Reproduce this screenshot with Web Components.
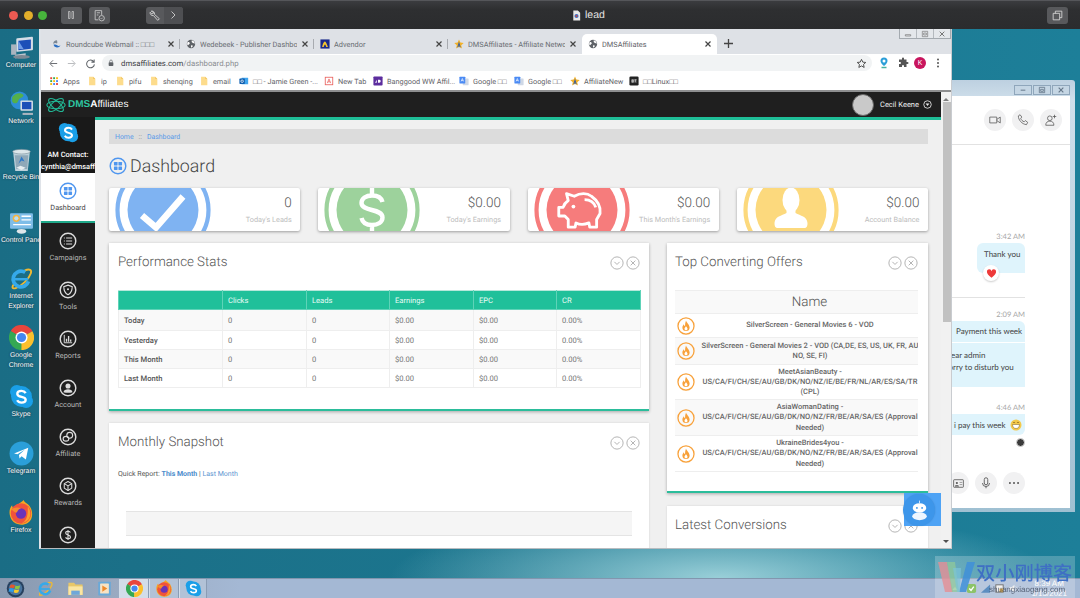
<!DOCTYPE html>
<html>
<head>
<meta charset="utf-8">
<title>lead</title>
<style>
    html, body { margin: 0; padding: 0; width: 1080px; height: 598px; overflow: hidden; background: #1b6f85; font-family: Roboto, "Liberation Sans", sans-serif; }
</style>
</head>
<body>
<mac-desk>
    <mac-titlebar></mac-titlebar>
    <desk-area>
        <desk-icon icon="computer" at="0" label="Computer"></desk-icon>
        <desk-icon icon="network" at="56" label="Network"></desk-icon>
        <desk-icon icon="recycle" at="112" label="Recycle Bin"></desk-icon>
        <desk-icon icon="control" at="175" label="Control Pane"></desk-icon>
        <desk-icon icon="ie" at="231" label="Internet<br>Explorer"></desk-icon>
        <desk-icon icon="chrome" at="290" label="Google<br>Chrome"></desk-icon>
        <desk-icon icon="skype" at="349" label="Skype"></desk-icon>
        <desk-icon icon="telegram" at="406" label="Telegram"></desk-icon>
        <desk-icon icon="firefox" at="465" label="Firefox"></desk-icon>
        <skype-window></skype-window>
        <chrome-window>
            <browser-tabs></browser-tabs>
            <browser-toolbar></browser-toolbar>
            <bookmark-bar></bookmark-bar>
            <dms-page>
                <dash-board>
                    <stat-card slot="stats" art="check" color="#7fb3f2" value="0" label="Today's Leads"></stat-card>
                    <stat-card slot="stats" art="dollar" color="#9dd29c" value="$0.00" label="Today's Earnings"></stat-card>
                    <stat-card slot="stats" art="piggy" color="#f67c7c" value="$0.00" label="This Month's Earnings"></stat-card>
                    <stat-card slot="stats" art="person" color="#fcd97d" value="$0.00" label="Account Balance"></stat-card>

                    <dash-panel slot="left" heading="Performance Stats" accent>
                        <stats-table></stats-table>
                    </dash-panel>
                    <dash-panel slot="left" heading="Monthly Snapshot">
                        <monthly-snapshot></monthly-snapshot>
                    </dash-panel>

                    <dash-panel slot="right" heading="Top Converting Offers" accent style="--pad-l:8px;--pad-r:10px">
                        <offers-table>
                            <offer-row h="24">SilverScreen - General Movies 6 - VOD</offer-row>
                            <offer-row h="27" alt>SilverScreen - General Movies 2 - VOD (CA,DE, ES, US, UK, FR, AU<br>NO, SE, FI)</offer-row>
                            <offer-row h="35">MeetAsianBeauty -<br>US/CA/FI/CH/SE/AU/GB/DK/NO/NZ/IE/BE/FR/NL/AR/ES/SA/TR<br>(CPL)</offer-row>
                            <offer-row h="36" alt>AsiaWomanDating -<br>US/CA/FI/CH/SE/AU/GB/DK/NO/NZ/FR/BE/AR/SA/ES (Approval<br>Needed)</offer-row>
                            <offer-row h="36">UkraineBrides4you -<br>US/CA/FI/CH/SE/AU/GB/DK/NO/NZ/FR/BE/AR/SA/ES (Approval<br>Needed)</offer-row>
                        </offers-table>
                    </dash-panel>
                    <dash-panel slot="right" heading="Latest Conversions" style="--pad-l:8px;--pad-r:10px"></dash-panel>
                </dash-board>
            </dms-page>
        </chrome-window>
    </desk-area>
    <win-taskbar></win-taskbar>
    <blog-mark></blog-mark>
</mac-desk>

<script>
// shared svg icons, all on a 24 box unless noted
const svg = (body, size = 24, box = 24) =>
    `<svg xmlns="http://www.w3.org/2000/svg" width="${size}" height="${size}" viewBox="0 0 ${box} ${box}">${body}</svg>`;

const ring = '<circle cx="12" cy="12" r="10.4" fill="none" stroke="currentColor" stroke-width="1.9"/>';

const NAV_ICONS = {
    dash: ring + '<g fill="currentColor"><rect x="6.6" y="6.6" width="4.8" height="4.8" rx=".6"/><rect x="12.6" y="6.6" width="4.8" height="4.8" rx=".6"/><rect x="6.6" y="12.6" width="4.8" height="4.8" rx=".6"/><rect x="12.6" y="12.6" width="4.8" height="4.8" rx=".6"/></g>',
    list: ring + '<g stroke="currentColor" stroke-width="1.5" fill="none"><path d="M9.5 8h8M9.5 12h8M9.5 16h8"/><path d="M6.5 8h1.2M6.5 12h1.2M6.5 16h1.2"/></g>',
    shield: ring + '<path d="M12 5.5l5.6 2c0 5-1.6 8.6-5.6 10.8C8 16.100 6.400 12.500 6.400 7.500z" fill="none" stroke="currentColor" stroke-width="1.5"/><circle cx="12" cy="11" r="1.400" fill="currentColor"/>',
    bars: ring + '<path d="M7 6.500V17h10.500" fill="none" stroke="currentColor" stroke-width="1.300"/><path d="M10 15.500v-4M12.800 15.500V8M15.600 15.500v-3" stroke="currentColor" stroke-width="1.800"/>',
    user: ring + '<circle cx="12" cy="9.300" r="3.400" fill="currentColor"/><path d="M6 17.500c.4-3 3-4 6-4s5.600 1 6 4c-3 1-9 1-12 0z" fill="currentColor"/>',
    link: ring + '<g fill="none" stroke="currentColor" stroke-width="1.500"><circle cx="14.300" cy="9.700" r="3.900"/><ellipse cx="9.300" cy="14.300" rx="3.800" ry="3.200"/></g>',
    cube: ring + '<g fill="none" stroke="currentColor" stroke-width="1.400" stroke-linejoin="round"><path d="M12 6l5 2.800v6L12 18l-5-3.200v-6z"/><path d="M7 8.800l5 3 5-3M12 11.800V18"/></g>',
    money: ring + '<path d="M15.200 8.600c-.8-1.200-1.900-1.600-3.200-1.600-1.800 0-3.100 1-3.100 2.400 0 3.200 6.400 1.900 6.400 5.100 0 1.500-1.400 2.500-3.300 2.500-1.400 0-2.600-.6-3.300-1.800M12 5.200v13.600" fill="none" stroke="currentColor" stroke-width="1.500"/>'
};

const APP_ICONS = {
    computer: '<rect x="7" y="2" width="16" height="13" rx="1" fill="#d5dde6" transform="skewY(-6) translate(0 2)"/><rect x="9" y="4.500" width="12" height="9" fill="#1c4fb8" transform="skewY(-6) translate(0 2)"/><path d="M9 5.500l5 8H9z" fill="#6d9be6"/><path d="M2 9h5v10H2z" fill="#aab4bf"/><path d="M6 19l10-1.500v2.500L6 22.500z" fill="#bcc5ce"/><ellipse cx="12" cy="21" rx="8" ry="1.800" fill="#7d8994"/>',
    network: '<circle cx="10" cy="9" r="8.500" fill="#2d8ed8"/><path d="M3 6c3-4 8-5 11-2-1 3-4 2-5 5s-4 4-6 1zM13 12c2 0 3 1 2 3-1 1-3 1-4 0z" fill="#55b04a"/><rect x="11" y="9" width="12" height="10" rx="1" fill="#d5dde6"/><rect x="12.500" y="10.500" width="9" height="7" fill="#1c4fb8"/><path d="M13 21h10v2H13z" fill="#aab4bf"/>',
    recycle: '<path d="M4 5h16l-2 18H6z" fill="#bcd0da"/><path d="M5.500 8h13l-1 13H7z" fill="#8fa8b8"/><ellipse cx="12" cy="4.500" rx="8.500" ry="2.200" fill="#dce6ea" stroke="#7f939e" stroke-width=".6"/><path d="M9 16l3-7 3 5-3-1z" fill="#2f79c8"/><path d="M7 20l4-2 5 2-4 2z" fill="#e6edf0"/>',
    control: '<rect x="1" y="3" width="22" height="15" rx="1" fill="#7fbde8"/><circle cx="7" cy="8" r="3.500" fill="#f4b33f"/><circle cx="7" cy="8" r="2" fill="#b9def5"/><path d="M12 6h9M12 9.500h9M4 14h17" stroke="#fff" stroke-width="1.300"/><ellipse cx="12" cy="20.500" rx="4.500" ry="2.200" fill="#dfe6ea"/>',
    ie: '<path d="M5.500 16.500C2 20.500 3 22.500 7 21c5-2 12-8 14-14 1-3-1-5-6-2.500" fill="none" stroke="#efb932" stroke-width="1.800"/><circle cx="11.500" cy="12.500" r="7.500" fill="none" stroke="#35a9ea" stroke-width="3.600" stroke-dasharray="37 10" transform="rotate(18 11.500 12.500)"/><path d="M5 11.500h13.500v2.400H5z" fill="#35a9ea"/>',
    chrome: '<circle cx="12" cy="12" r="8.400" fill="none" stroke="#e8453c" stroke-width="7.400" stroke-dasharray="17.600 35.200" transform="rotate(-150 12 12)"/><circle cx="12" cy="12" r="8.400" fill="none" stroke="#35a853" stroke-width="7.400" stroke-dasharray="17.600 35.200" transform="rotate(90 12 12)"/><circle cx="12" cy="12" r="8.400" fill="none" stroke="#fbc02d" stroke-width="7.400" stroke-dasharray="17.600 35.200" transform="rotate(-30 12 12)"/><circle cx="12" cy="12" r="5.800" fill="#fff"/><circle cx="12" cy="12" r="4.400" fill="#4587f1"/>',
    skype: '<g fill="#1a9fe8"><circle cx="12" cy="12" r="10"/><circle cx="7.500" cy="7.500" r="6.500"/><circle cx="16.500" cy="16.500" r="6.500"/></g><path d="M16 8.700c-.9-1.500-2.400-2.100-4-2.100-2.400 0-4 1.200-4 2.900 0 3.700 8 2.200 8 5.600 0 1.600-1.700 2.800-4 2.800-1.800 0-3.300-.8-4.200-2.300" fill="none" stroke="#fff" stroke-width="2.300"/>',
    telegram: '<circle cx="12" cy="12" r="11.500" fill="#2b9fd9"/><path d="M4.800 12l13.700-5.500-2.300 11.200-4.100-3-2 2-.6-3.300 5.600-5-7 4.400z" fill="#fff"/>',
    firefox: '<path d="M14 0c1 3 5 3 7 8 2 4 2 11-3 14-5 3-12 2-15.500-3C-.5 14 0 8 3 5c0 2 1 3 2 3 1-3 6-5 9-8z" fill="#f5a623"/><circle cx="11.500" cy="13" r="9.800" fill="#f0533c"/><path d="M18 6c3 4 3.500 9 .5 13-2 2-4 3-6 3 4-2 6-6 5.500-16z" fill="#fb9f2c"/><circle cx="11.500" cy="13" r="5" fill="#6a33b8"/><path d="M2.500 9c2-2 6-2.500 9-1-2 .5-3 2-4 4-1.500 0-3.500-1-5-3z" fill="#f58b2e"/>',
    fold: '<path d="M2 4h8l2 2.500h10V21H2z" fill="#e8c768"/><path d="M2 9h20v12H2z" fill="#fbe6a2"/><path d="M6 15h12v6H6z" fill="#6fa7d9"/>',
    media: '<rect x="2" y="1" width="20" height="22" rx="1" fill="#69a9d8"/><rect x="5" y="4" width="14" height="16" rx="1" fill="#f7e3c4"/><path d="M8.500 7l8 5-8 5z" fill="#ef8a2a"/>',
    winorb: '<circle cx="12" cy="12" r="11" fill="#27415f"/><circle cx="12" cy="12" r="8.600" fill="#49749f"/><path d="M5.500 7.500c2-.8 4-.6 5.800.3l-1.100 4c-1.800-1-3.800-1-5.800-.4z" fill="#e2572d"/><path d="M12 8.100c2 1 4 1 6-.2l-1.100 4c-2 1.100-3.900 1-5.900 0z" fill="#8cc63f"/><path d="M4.200 12.200c2-.6 4-.6 5.800.4l-1.100 4c-1.800-1-3.800-1-5.800-.3z" fill="#2f9ee6"/><path d="M10.700 12.800c2 1 4 1 6 0l-1.100 4c-2 1-4 1-5.900 0z" fill="#f5c92e"/>'
};

const TAB_ICONS = {
    cube: '<path d="M12 3a9 9 0 0 0-9 9c3-3 7-3 9-1 2-3 0-6 0-8z" fill="#7b8794"/><path d="M3.500 14a9 9 0 0 0 17 1c-3 2-6 2-8 0-3-2-6-2-9-1z" fill="#2a6fc4"/>',
    globe: '<circle cx="12" cy="12" r="10" fill="#5f6368"/><path d="M4 7c3 0 5 1 5 3s-2 2-3 4-2 1-3-1c-.5-2 0-4 1-6zM14 3c4 1 7 4 7 8-2 0-3-2-5-2s-3-2-2-6zM13 15c2 0 4 1 3 3l-3 3c-1-2-2-4 0-6z" fill="#fff"/>',
    advendor: '<rect x="1" y="1" width="22" height="22" fill="#1a2a8a"/><path d="M5 19c2-9 5-13 7-13s4 5 7 13h-4c-1-3-2-6-3-6s-2 3-3 6z" fill="#f4c52e"/>',
    star: '<path d="M12 1l3.300 7.500 8 .8-6 5.400 1.800 8L12 18.500 4.900 22.700l1.800-8-6-5.400 8-.8z" fill="#f3b229"/><path d="M12 6l-4 14h2.500l1.500-6 1.500 6H16z" fill="#2c59a8"/>'
};

const BOOK_ICONS = {
    apps: '<g>' + [['#ea4335',3],['#fbbc05',10],['#34a853',17]].map(([c, x], i) => [3, 10, 17].map((y, j) => `<rect x="${x}" y="${y}" width="4.500" height="4.500" fill="${['#ea4335','#34a853','#fbbc05','#4285f4'][(i + j) % 4]}"/>`).join('')).join('') + '</g>',
    folder: '<path d="M5 2h10l5 5v15H5z" fill="#fddc8c"/><path d="M15 2l5 5h-5z" fill="#f2c55f"/>',
    outlook: '<rect x="6" y="4" width="16" height="16" rx="1" fill="#41a5ee"/><rect x="1" y="6" width="13" height="13" rx="1.500" fill="#0f5fb0"/><circle cx="7.500" cy="12.500" r="3" fill="none" stroke="#fff" stroke-width="1.800"/>',
    newtab: '<rect x="3" y="3" width="18" height="18" fill="#fff" stroke="#e9615d" stroke-width="2"/><path d="M8 17l4-10 4 10M9.500 14h5" fill="none" stroke="#e9615d" stroke-width="1.800"/>',
    bang: '<rect x="1" y="1" width="22" height="22" rx="2" fill="#5c2d9e"/><path d="M5 16l4-7v7zM12 9h3a3.500 3.500 0 0 1 0 7h-3z" fill="#fff"/>',
    gtrans: '<rect x="9" y="6" width="14" height="16" rx="1" fill="#cfd8e6"/><rect x="1" y="2" width="14" height="16" rx="1" fill="#4a8af4"/><path d="M5 13l3-7 3 7M6 11h4" fill="none" stroke="#fff" stroke-width="1.500"/>',
    star: TAB_ICONS.star,
    bt: '<rect x="1" y="1" width="22" height="22" rx="3" fill="#222"/><path d="M5 7h14v10H5z" fill="#444"/><path d="M7 9h3a1.500 1.500 0 0 1 0 3H7zM7 12h3a1.500 1.500 0 0 1 0 3H7zM13 9h5M15.500 9v6" fill="none" stroke="#fff" stroke-width="1.200"/>'
};

const STAT_ART = {
    check: '<path d="M-21 5.500L-7 17.500 20-13.500" fill="none" stroke="#fff" stroke-width="6.500"/>',
    dollar: '<path d="M10.500-8c-1-4-5-6.500-10.500-6.500-6 0-10.500 3-10.500 7.500C-10.500 2 10.500-2 10.500 7.500c0 4.500-4.500 7.500-10.500 7.500-5.500 0-9.500-2.500-10.500-7M0-14.500V-25M0 15V25" fill="none" stroke="#fff" stroke-width="4.400"/>',
    piggy: '<g transform="scale(.86) translate(1 1)"><path d="M-17-12l-2-8 9 3c7-4 15-4 20 0 7 5 11 12 10 20l-4 7v9h-8l-1-5c-5 2-11 2-15 0l-1 5h-8v-9l-4-4h-7V-4h5c1-3 3-6 6-8z" fill="none" stroke="#fff" stroke-width="3.300" stroke-linejoin="round"/><circle cx="-11" cy="-5" r="2.200" fill="#fff"/><path d="M2-13c6 0 11 3 13 9" fill="none" stroke="#fff" stroke-width="3.300"/></g>',
    person: '<ellipse cx="0" cy="-10" rx="8.500" ry="12.500" fill="#fff"/><path d="M-4.500-2h9v5c5 3 11.500 3 12 10 .2 3-1 5-3 5h-27c-2 0-3.200-2-3-5 .5-7 7-7 12-10z" fill="#fff"/>'
};

class ShadowBox extends HTMLElement {
    constructor() {
        super();
        this.attachShadow({mode: 'open'});
    }

    connectedCallback() {
        this.shadowRoot.innerHTML = `<style>${this.styles()}</style>${this.markup()}`;
    }

    styles() { return ':host { display: block; }'; }
    markup() { return '<slot></slot>'; }
}

class MacDesk extends ShadowBox {
    styles() {
        return `:host { display: flex; flex-direction: column; width: 1080px; height: 598px; position: relative; overflow: hidden;
            text-rendering: geometricPrecision; filter: blur(.3px); }`;
    }
}

class MacTitlebar extends ShadowBox {
    styles() {
        return `
            :host { display: flex; align-items: center; flex: none; height: 29px; box-sizing: border-box; padding: 0 12px 0 9px;
                background: linear-gradient(#3b3c3f, #2e2f31 30%, #2b2c2e); border-top: 1px solid #55565a; position: relative; }
            .dot { width: 9px; height: 9px; border-radius: 50%; margin-right: 5.500px; }
            .btn { display: flex; align-items: center; justify-content: center; height: 17px; width: 21px; background: #58595c; border-radius: 3px; color: #d8d8d8; }
            .pause { margin-left: 8px; }
            .shot { margin-left: 7px; }
            .tool { margin-left: 36px; width: 37px; }
            .tool span { flex: 1; display: flex; justify-content: center; align-items: center; height: 100%; }
            .tool span + span { background: #4e4f52; border-radius: 0 3px 3px 0; }
            .name { position: absolute; left: 571px; top: 0; height: 28px; display: flex; align-items: center; gap: 3px; color: #e6e6e6; font: 10.500px "Liberation Sans", sans-serif; }
            .right { margin-left: auto; }
        `;
    }

    markup() {
        return `
            <i class="dot" style="background:#ec5a52"></i>
            <i class="dot" style="background:#e3ae2b"></i>
            <i class="dot" style="background:#47b43c"></i>
            <div class="btn pause">${svg('<path d="M7 5h3v14H7zM14 5h3v14h-3z" fill="none" stroke="currentColor" stroke-width="1.300"/>', 12)}</div>
            <div class="btn shot">${svg('<path d="M4 3h12v8M4 3v17h6M7 7h6M7 11h3" fill="none" stroke="currentColor" stroke-width="1.400"/><circle cx="16" cy="17" r="5" fill="none" stroke="currentColor" stroke-width="1.400"/><path d="M14 17l1.500 1.500 2.500-2.500" fill="none" stroke="currentColor"/>', 13)}</div>
            <div class="btn tool">
                <span>${svg('<path d="M6 4a5 5 0 0 1 6 6l9 8-3 3-8-9a5 5 0 0 1-6-6l3 3 3-1 0-2z" fill="none" stroke="currentColor" stroke-width="1.600" stroke-linejoin="round"/>', 13)}</span>
                <span>${svg('<path d="M9 5l7 7-7 7" fill="none" stroke="currentColor" stroke-width="1.700"/>', 12)}</span>
            </div>
            <div class="name">
                ${svg('<path d="M5 1h10l5 5v17H5z" fill="#e8e8e8"/><circle cx="12" cy="13" r="4.500" fill="#3d6fc2"/><circle cx="12" cy="13" r="2" fill="#d84a3e"/>', 11)}
                <span>lead</span>
            </div>
            <div class="btn right">${svg('<path d="M4 8h12v12H4z M8 8V4h12v12h-4" fill="none" stroke="currentColor" stroke-width="1.600"/>', 13)}</div>
        `;
    }
}

class DeskArea extends ShadowBox {
    styles() {
        return `:host { display: block; flex: 1; position: relative; overflow: hidden;
            background:
                radial-gradient(330px 70px at 720px 549px, rgba(160,212,220,.95), rgba(160,212,220,0)),
                linear-gradient(90deg, #1a6d85 0, #1b7088 130px, #1d7f99 1080px); }`;
    }
}

class DeskIcon extends ShadowBox {
    styles() {
        const top = this.getAttribute('at') || 0;
        return `
            :host { position: absolute; left: 0; top: ${top}px; width: 42px; display: flex; flex-direction: column; align-items: center; color: #fff;
                font: 6.900px/9.800px "Liberation Sans", sans-serif; text-align: center; text-shadow: 0 0 2px #123; white-space: nowrap; }
            svg { display: block; margin: 6px 0 1px; }
        `;
    }

    markup() {
        return `${svg(APP_ICONS[this.getAttribute('icon')], 25)}<span>${this.getAttribute('label')}</span>`;
    }
}

class RoundButton extends ShadowBox {
    styles() {
        return `:host { display: flex; align-items: center; justify-content: center; width: 22px; height: 22px; border-radius: 50%; background: #f1f1f2; flex: none; color: #555; }`;
    }
}

class SkypeWindow extends ShadowBox {
    styles() {
        return `
            :host { position: absolute; left: 940px; top: 51px; width: 135px; height: 432px; box-sizing: border-box; padding: 16px 5px 4px 0;
                background: linear-gradient(#bdd0e0, #cfdfeb 20px, #9fc0d2); border-radius: 3px 3px 0 0; font: 8px Lato, "Liberation Sans", sans-serif; color: #444; }
            .wins { position: absolute; top: 5px; right: 5px; display: flex; gap: 1px; }
            .wins i { width: 18px; height: 10px; border: 1px solid #8fa6bb; box-sizing: border-box; background: #c5d6e4; display: flex; align-items: center; justify-content: center; color: #66788a; }
            .body { background: #fff; height: 100%; display: flex; flex-direction: column; }
            .head { height: 49px; flex: none; box-sizing: border-box; border-bottom: 1px solid #e2e2e2; display: flex; justify-content: flex-end; align-items: flex-start; gap: 6px; padding: 13px 8px 0 0; }
            .log { width: 85px; flex: 1; display: flex; flex-direction: column; align-items: stretch; white-space: nowrap; }
            .time { height: 10px; line-height: 10px; text-align: right; color: #a7a7a7; font-size: 7.500px; margin-bottom: 1px; }
            .bubble { background: #dff4fc; padding-left: 16px; position: relative; border-radius: 6px 6px 0 0; }
            .thanks { margin: 0 0 0 37px; height: 30px; padding: 6px 0 0 7px; box-sizing: border-box; border-radius: 6px 6px 0 6px; }
            .heart { position: absolute; left: 6px; bottom: -8px; width: 16px; height: 16px; border-radius: 50%; background: #fff; box-shadow: 0 1px 2px rgba(0,0,0,.2); display: flex; align-items: center; justify-content: center; }
            hr { border: 0; border-top: 1px solid #e2e2e2; margin: 24px 0 12px; width: 100%; }
            .pay { height: 21px; line-height: 21px; margin-bottom: 1px; }
            .dear { height: 44px; line-height: 12px; padding: 6px 0 0 5px; box-sizing: border-box; border-radius: 0; }
            .last { height: 21px; padding-left: 14px; display: flex; align-items: center; gap: 4px; border-radius: 6px 0 6px 6px; }
            .mug { margin: 3px 0 0 auto; width: 9px; height: 9px; border-radius: 50%; background: #3a3a3a; border: 1px solid #ddd; box-sizing: border-box; }
            .tools { display: flex; gap: 6px; justify-content: flex-end; margin-top: 25px; }
        `;
    }

    markup() {
        return `
            <div class="wins">
                <i>${svg('<path d="M5 11h14v3H5z" fill="currentColor"/>', 8)}</i>
                <i>${svg('<path d="M4 4h16v16H4zM8 10h8v6H8z" fill="none" stroke="currentColor" stroke-width="2.500"/>', 8)}</i>
                <i>${svg('<path d="M5 5l14 14M19 5L5 19" stroke="currentColor" stroke-width="3.500"/>', 8)}</i>
            </div>
            <div class="body">
                <div class="head">
                    <round-button>${svg('<path d="M3 7h12v10H3zM15 11l6-4v10l-6-4" fill="none" stroke="currentColor" stroke-width="1.300"/>', 14)}</round-button>
                    <round-button>${svg('<path d="M7 3l3 4-2 2c1 3 3 5 6 6l2-2 4 3-2 4C10 19 4 12 4 5z" fill="none" stroke="currentColor" stroke-width="1.300"/>', 14)}</round-button>
                    <round-button>${svg('<circle cx="10" cy="9" r="4" fill="none" stroke="currentColor" stroke-width="1.300"/><path d="M3 21c0-5 3-7 7-7s7 2 7 7zM18 3v6M15 6h6" fill="none" stroke="currentColor" stroke-width="1.300"/>', 14)}</round-button>
                </div>
                <div class="log">
                    <div class="time" style="margin-top:87px">3:42 AM</div>
                    <div class="bubble thanks">Thank you
                        <span class="heart">${svg('<path d="M12 21C5 15 2 12 2 8a5 5 0 0 1 10-1 5 5 0 0 1 10 1c0 4-3 7-10 13z" fill="#ee3a3a"/>', 11)}</span>
                    </div>
                    <hr>
                    <div class="time">2:09 AM</div>
                    <div class="bubble pay">Payment this week</div>
                    <div class="bubble dear">Dear admin<br>sorry to disturb you</div>
                    <div class="time" style="margin-top:16px">4:46 AM</div>
                    <div class="bubble last">
                        <span>i pay this week</span>
                        ${svg('<circle cx="12" cy="12" r="11" fill="#f4c94a"/><path d="M5 11h14c0 5-3 8-7 8s-7-3-7-8z" fill="#fff" stroke="#7a5a1a"/><path d="M6 8c1-2 3-2 4 0M14 8c1-2 3-2 4 0" fill="none" stroke="#7a5a1a" stroke-width="1.500"/>', 12)}
                    </div>
                    <div class="mug"></div>
                    <div class="tools">
                        <round-button>${svg('<rect x="3" y="5" width="18" height="14" rx="1" fill="none" stroke="currentColor" stroke-width="1.500"/><circle cx="9" cy="11" r="2" fill="currentColor"/><path d="M5.500 17c.5-2 6.500-2 7 0zM14 10h5M14 14h5" fill="currentColor" stroke="currentColor"/>', 13)}</round-button>
                        <round-button>${svg('<rect x="9" y="3" width="6" height="12" rx="3" fill="none" stroke="currentColor" stroke-width="1.500"/><path d="M6 12a6 6 0 0 0 12 0M12 18v3" fill="none" stroke="currentColor" stroke-width="1.500"/>', 14)}</round-button>
                        <round-button>${svg('<g fill="currentColor"><circle cx="5" cy="12" r="1.700"/><circle cx="12" cy="12" r="1.700"/><circle cx="19" cy="12" r="1.700"/></g>', 14)}</round-button>
                    </div>
                </div>
            </div>
        `;
    }
}

class ChromeWindow extends ShadowBox {
    styles() {
        return `:host { position: absolute; left: 39px; top: 0; width: 913px; height: 520px; box-sizing: border-box; display: flex; flex-direction: column;
            background: #fff; border-left: 2px solid #dfe3e8; border-right: 1px solid #c9ccd0; border-bottom: 1px solid #b8bcc0; overflow: hidden; }`;
    }
}

class TabItem extends ShadowBox {
    styles() {
        const on = this.hasAttribute('active');
        const sep = on || this.hasAttribute('last') ? '' : 'background: linear-gradient(#a8abb0, #a8abb0) right 5px / 1px 10px no-repeat;';
        return `
            :host { display: flex; align-items: center; flex: none; width: ${on ? 135 : 134}px; height: 20px; box-sizing: border-box; padding: 0 5px 0 6px; gap: 4px;
                font-size: 7.400px; color: ${on ? '#5f6368' : '#6a6e73'}; ${on ? 'background: #fff; border-radius: 5px 5px 0 0;' : sep} }
            svg { flex: none; display: block; }
            span { flex: 1; overflow: hidden; white-space: nowrap; }
            .x { color: #444; }
        `;
    }

    markup() {
        return `${svg(TAB_ICONS[this.getAttribute('icon')], 10)}
            <span>${this.getAttribute('label')}</span>
            <svg class="x" width="8" height="8" viewBox="0 0 8 8"><path d="M1.500 1.500l5 5M6.500 1.500l-5 5" stroke="currentColor" stroke-width="1.200"/></svg>`;
    }
}

class BrowserTabs extends ShadowBox {
    styles() {
        return `
            :host { display: flex; align-items: flex-end; height: 25px; flex: none; box-sizing: border-box; padding-left: 5px; background: #dee1e6; position: relative; }
            .plus { margin: 0 0 5px 6px; color: #444; }
            .wins { position: absolute; top: 0; right: 0; height: 10px; width: 52px; display: flex; box-sizing: border-box; border: 1px solid #a4aab0; border-top: 0; background: #e4e7eb; }
            .wins i { flex: 1; border-right: 1px solid #b4b9be; display: flex; align-items: center; justify-content: center; color: #777; }
        `;
    }

    markup() {
        return `
            <tab-item icon="cube" label="Roundcube Webmail :: □□□"></tab-item>
            <tab-item icon="globe" label="Wedebeek - Publisher Dashboard"></tab-item>
            <tab-item icon="advendor" label="Advendor"></tab-item>
            <tab-item icon="star" label="DMSAffiliates - Affiliate Network" last></tab-item>
            <tab-item icon="globe" label="DMSAffiliates" active></tab-item>
            <svg class="plus" width="11" height="11" viewBox="0 0 11 11"><path d="M5.500 1v9M1 5.500h9" stroke="currentColor" stroke-width="1.300"/></svg>
            <div class="wins">
                <i>${svg('<path d="M4 14h16v4H4z" fill="none" stroke="currentColor" stroke-width="2"/>', 8)}</i>
                <i>${svg('<path d="M4 4h16v16H4zM8 9h8v6H8z" fill="none" stroke="currentColor" stroke-width="2"/>', 8)}</i>
                <i style="border:0">${svg('<path d="M5 5l14 14M19 5L5 19" stroke="currentColor" stroke-width="3"/>', 8)}</i>
            </div>
        `;
    }
}

class BrowserToolbar extends ShadowBox {
    styles() {
        return `
            :host { display: flex; align-items: center; height: 18px; flex: none; background: #fff; color: #5f6368; padding-left: 3px; }
            .nav { width: 18.500px; display: flex; justify-content: center; flex: none; }
            .omni { margin-left: 2.500px; width: 770px; height: 16px; box-sizing: border-box; border-radius: 8px; background: #f1f3f4; display: flex; align-items: center; padding: 0 5px; font-size: 7.800px; color: #8a8d91; flex: none; }
            .omni b { font-weight: 400; color: #3c4043; }
            .lock { margin-right: 6px; color: #5f6368; display: flex; }
            .star { margin-left: auto; color: #444; display: flex; }
            .ext { flex: none; display: flex; justify-content: center; }
            .me { width: 12px; height: 12px; border-radius: 50%; background: #c8155e; color: #fff; font-size: 7px; display: flex; align-items: center; justify-content: center; }
        `;
    }

    markup() {
        return `
            <div class="nav">${svg('<path d="M20 12H5M11 5l-7 7 7 7" fill="none" stroke="currentColor" stroke-width="2"/>', 11)}</div>
            <div class="nav" style="color:#b4b6b9">${svg('<path d="M4 12h15M13 5l7 7-7 7" fill="none" stroke="currentColor" stroke-width="2"/>', 11)}</div>
            <div class="nav">${svg('<path d="M19 8a8.500 8.500 0 1 0 1.500 6M20 3v6h-6" fill="none" stroke="currentColor" stroke-width="2.200"/>', 11)}</div>
            <div class="omni">
                <span class="lock">${svg('<rect x="5" y="10" width="14" height="11" rx="2" fill="currentColor"/><path d="M8 10V7a4 4 0 0 1 8 0v3" fill="none" stroke="currentColor" stroke-width="2"/>', 8)}</span>
                <span><b>dmsaffiliates.com</b>/dashboard.php</span>
                <span class="star">${svg('<path d="M12 3l2.800 6 6.500.7-4.900 4.400 1.400 6.500L12 17.300 6.200 20.600l1.400-6.500L2.700 9.700 9.200 9z" fill="none" stroke="currentColor" stroke-width="2"/>', 11)}</span>
            </div>
            <div class="ext" style="width:24px">${svg('<path d="M12 1a7 7 0 0 1 7 7c0 3-4 8-7 10-3-2-7-7-7-10a7 7 0 0 1 7-7z" fill="#2b9ed8"/><circle cx="12" cy="8" r="3" fill="#fff"/><path d="M7 21h10" stroke="#48b3a0" stroke-width="3"/>', 12)}</div>
            <div class="ext" style="width:14px">${svg('<path d="M10 3a2 2 0 0 1 4 0v2h5v5h2a2 2 0 0 1 0 4h-2v6h-5v-2a2 2 0 0 0-4 0v2H4v-6h2a2 2 0 0 0 0-4H4V5h6z" fill="#555"/>', 12)}</div>
            <div class="ext" style="width:20px"><div class="me">K</div></div>
            <div class="ext" style="width:16px">${svg('<g fill="#555"><circle cx="12" cy="5" r="2"/><circle cx="12" cy="12" r="2"/><circle cx="12" cy="19" r="2"/></g>', 12)}</div>
        `;
    }
}

class BookItem extends ShadowBox {
    styles() {
        const w = this.getAttribute('w');
        return `
            :host { display: flex; align-items: center; gap: 4px; flex: none; width: ${w}px; font-size: 7.300px; color: #5f6368; white-space: nowrap; overflow: hidden; }
            svg { flex: none; }
        `;
    }

    markup() {
        return `${svg(BOOK_ICONS[this.getAttribute('icon')], 10)}<span>${this.getAttribute('label')}</span>`;
    }
}

class BookmarkBar extends ShadowBox {
    styles() {
        return `:host { display: flex; align-items: center; height: 20px; flex: none; box-sizing: border-box; background: #fff; border-bottom: 2px solid #8e8f90; padding-left: 8px; }`;
    }

    markup() {
        const items = [
            ['apps', 'Apps', 38], ['folder', 'ip', 28], ['folder', 'pifu', 34], ['folder', 'shenqing', 50], ['folder', 'email', 40],
            ['outlook', '□□ - Jamie Green -...', 85], ['newtab', 'New Tab', 49], ['bang', 'Banggood WW Affil...', 86],
            ['gtrans', 'Google □□', 55], ['gtrans', 'Google □□', 56], ['star', 'AffiliateNew', 59], ['bt', '□□Linux□□', 60]
        ];
        return items.map(([icon, label, w]) => `<book-item icon="${icon}" label="${label}" w="${w}"></book-item>`).join('');
    }
}

class DmsPage extends ShadowBox {
    styles() {
        return `
            :host { display: grid; grid-template-columns: 54px 846px 10px; grid-template-rows: 25px 1fr; flex: 1; min-height: 0; position: relative; overflow: hidden; background: #f0f0f0; }
            .brand { grid-column: 1 / 3; background: #1f1f1f; display: flex; align-items: center; padding-left: 5px; color: #fff; }
            .word { font: 10px "Liberation Sans", sans-serif; margin-left: 2px; }
            .word b { color: #2ec5a0; }
            .word em { font-style: normal; font-weight: 700; }
            .user { margin-left: auto; display: flex; align-items: center; font-size: 7.500px; color: #eee; padding-right: 9px; }
            .pic { width: 22px; height: 22px; border-radius: 50%; background: #c9c9c9; border: 1px solid #666; box-sizing: border-box; margin-right: 6px; }
            .drop { margin-left: 4px; display: flex; }
            .bar { grid-column: 3; grid-row: 1 / 3; background: #f1f1f1; position: relative; }
            .thumb { position: absolute; left: 2px; right: 0; top: 10px; height: 220px; background: #c1c1c1; }
            .up, .down { position: absolute; left: 2px; width: 0; height: 0; border: 3px solid transparent; }
            .up { top: 3px; border-bottom-color: #7d7d7d; }
            .down { bottom: 2px; border-top-color: #505050; }
            .main { border-top: 3px solid #1fbe98; overflow: hidden; min-height: 0; }
            .chat { position: absolute; right: 10px; bottom: 22px; width: 37px; height: 33px; background: #4ea3f5; }
            .chat div { position: absolute; left: -1px; top: 1px; width: 32px; height: 32px; border-radius: 50%; background: #3d96ea; display: flex; align-items: center; justify-content: center; box-shadow: 0 0 2px rgba(0,0,0,.15); }
        `;
    }

    markup() {
        return `
            <div class="brand">
                ${svg('<g fill="none" stroke="#22b795" stroke-width="1.300"><ellipse cx="12" cy="12" rx="11" ry="4.500"/><ellipse cx="12" cy="12" rx="11" ry="4.500" transform="rotate(40 12 12)"/><ellipse cx="12" cy="12" rx="11" ry="4.500" transform="rotate(-40 12 12)"/></g>', 20)}
                <span class="word"><b>DMS</b><em>A</em>ffiliates</span>
                <div class="user">
                    <div class="pic"></div>
                    <span>Cecil Keene</span>
                    <span class="drop">${svg('<circle cx="12" cy="12" r="10" fill="none" stroke="#eee" stroke-width="2.200"/><path d="M7 9.500h10L12 16z" fill="#eee"/>', 9)}</span>
                </div>
            </div>
            <div class="bar"><i class="up"></i><div class="thumb"></div><i class="down"></i></div>
            <dms-sidebar></dms-sidebar>
            <div class="main"><slot></slot></div>
            <div class="chat"><div>${svg('<ellipse cx="12" cy="9.500" rx="6.500" ry="4.500" fill="#fff"/><path d="M12 5V2.500" stroke="#cfe4fb"/><circle cx="9.500" cy="9.500" r=".9" fill="#3d96ea"/><circle cx="14.500" cy="9.500" r=".9" fill="#3d96ea"/><ellipse cx="12" cy="17.500" rx="7" ry="3.800" fill="#eef6ff"/>', 25)}</div></div>
        `;
    }
}

class NavItem extends ShadowBox {
    styles() {
        const on = this.hasAttribute('active');
        return `
            :host { display: flex; flex-direction: column; align-items: center; flex: none; height: 49px; box-sizing: border-box; padding-top: 9px; gap: 3px;
                background: ${on ? '#fff' : 'transparent'}; color: ${on ? '#4f96ef' : '#dcdcdc'}; ${on ? 'border-bottom: 2px solid #1fa98a; height: 50px;' : ''} }
            span { font-size: 7.300px; line-height: 10px; color: ${on ? '#444' : '#b8b8b8'}; }
            svg { display: block; }
        `;
    }

    markup() {
        return `${svg(NAV_ICONS[this.getAttribute('icon')], 18)}<span>${this.getAttribute('label')}</span>`;
    }
}

class DmsSidebar extends ShadowBox {
    styles() {
        return `
            :host { display: flex; flex-direction: column; background: #1f1f1f; overflow: hidden; min-height: 0; }
            .am { height: 56px; flex: none; box-sizing: border-box; background: #191919; color: #fff; padding-top: 5px; display: flex; flex-direction: column; align-items: center; font-size: 7.400px; font-weight: 500; line-height: 12px; white-space: nowrap; overflow: hidden; }
            .am svg { margin-bottom: 6px; flex: none; }
            .am .mail { align-self: flex-start; }
        `;
    }

    markup() {
        return `
            <div class="am">
                ${svg(APP_ICONS.skype, 21)}
                <span>AM Contact:</span>
                <span class="mail">cynthia@dmsaffiliates.com</span>
            </div>
            <nav-item icon="dash" label="Dashboard" active></nav-item>
            <nav-item icon="list" label="Campaigns"></nav-item>
            <nav-item icon="shield" label="Tools"></nav-item>
            <nav-item icon="bars" label="Reports"></nav-item>
            <nav-item icon="user" label="Account"></nav-item>
            <nav-item icon="link" label="Affiliate"></nav-item>
            <nav-item icon="cube" label="Rewards"></nav-item>
            <nav-item icon="money" label="Payments"></nav-item>
        `;
    }
}

class DashBoard extends ShadowBox {
    styles() {
        return `
            :host { display: block; padding: 9px 13px 0 14px; }
            .crumb { height: 15px; background: #dcdcdc; display: flex; align-items: center; padding-left: 6px; gap: 5px; font-size: 6.900px; color: #5a9be8; }
            .crumb i { font-style: normal; color: #888; }
            h1 { margin: 0; height: 44px; box-sizing: border-box; display: flex; align-items: center; gap: 3px; font-weight: 300; font-size: 17.800px; color: #444; }
            h1 span { color: #4f96ef; display: flex; }
            .stats { display: grid; grid-template-columns: repeat(4, 1fr); gap: 18px; }
            .cols { display: grid; grid-template-columns: 540px 261px; gap: 18px; margin-top: 12px; }
            .col { display: flex; flex-direction: column; gap: 12px; min-width: 0; }
        `;
    }

    markup() {
        return `
            <div class="crumb"><span>Home</span><i>::</i><span>Dashboard</span></div>
            <h1><span>${svg(NAV_ICONS.dash, 18)}</span>Dashboard</h1>
            <div class="stats"><slot name="stats"></slot></div>
            <div class="cols">
                <div class="col"><slot name="left"></slot></div>
                <div class="col" style="gap:13px"><slot name="right"></slot></div>
            </div>
        `;
    }
}

class StatCard extends ShadowBox {
    styles() {
        return `
            :host { display: flex; align-items: center; height: 43px; background: #fff; overflow: hidden; border-radius: 2px; box-shadow: 0 1px 3px rgba(0,0,0,.35); }
            svg { flex: none; margin-left: 6px; }
            .txt { margin-left: auto; padding-right: 8.500px; text-align: right; white-space: nowrap; }
            .val { font-weight: 300; font-size: 13.500px; line-height: 20px; color: #555; }
            .lab { font-size: 7.300px; line-height: 12px; color: #bdbdbd; margin-top: 1px; }
        `;
    }

    markup() {
        const c = this.getAttribute('color');
        return `
            <svg width="96" height="96" viewBox="-48 -48 96 96">
                <circle r="45.500" fill="none" stroke="${c}" stroke-width="4.200"/>
                <circle r="35.500" fill="${c}"/>
                ${STAT_ART[this.getAttribute('art')]}
            </svg>
            <div class="txt"><div class="val">${this.getAttribute('value')}</div><div class="lab">${this.getAttribute('label')}</div></div>
        `;
    }
}

class DashPanel extends ShadowBox {
    styles() {
        return `
            :host { display: block; background: #fff; box-sizing: border-box; padding: 0 var(--pad-r, 9px) 0 var(--pad-l, 9px);
                ${this.hasAttribute('accent') ? 'border-bottom: 2px solid #2bbd9b; box-shadow: 0 1px 3px rgba(0,0,0,.3);' : 'box-shadow: 0 0 2px rgba(0,0,0,.12); min-height: 160px;'} }
            .head { height: 38px; box-sizing: border-box; padding-top: 1px; display: flex; align-items: center; justify-content: space-between; }
            h2 { margin: 0; font-weight: 300; font-size: 13.300px; color: #555; }
            .ctl { display: flex; gap: 2px; color: #aaa; }
        `;
    }

    markup() {
        return `
            <div class="head">
                <h2>${this.getAttribute('heading')}</h2>
                <div class="ctl">
                    ${svg('<circle cx="12" cy="12" r="10.500" fill="none" stroke="currentColor" stroke-width="1.500"/><path d="M7.500 10l4.500 4.500 4.500-4.500" fill="none" stroke="currentColor" stroke-width="1.500"/>', 14)}
                    ${svg('<circle cx="12" cy="12" r="10.500" fill="none" stroke="currentColor" stroke-width="1.500"/><path d="M8 8l8 8M16 8l-8 8" stroke="currentColor" stroke-width="1.500"/>', 14)}
                </div>
            </div>
            <slot></slot>
        `;
    }
}

class StatsTable extends ShadowBox {
    styles() {
        return `
            :host { display: block; margin: 9px 0 21px; }
            table { border-collapse: collapse; table-layout: fixed; width: 522px; font-size: 7.600px; color: #777; }
            th { background: #20c09a; color: #e9fbf6; font-weight: 400; text-align: left; height: 18px; padding: 0 5px; border: 1px solid #5fd3b8; border-top-color: #b6e7da; }
            td { height: 18px; padding: 0 5px; border: 1px solid #eee; }
            td:first-child { font-weight: 500; color: #555; }
            tr:nth-child(odd) td { background: #f9f9f9; }
            tbody tr:first-child td { height: 20px; }
        `;
    }

    markup() {
        const rows = ['Today', 'Yesterday', 'This Month', 'Last Month'];
        return `
            <table>
                <colgroup><col style="width:104px"><col style="width:84px"><col style="width:83px"><col style="width:84px"><col style="width:83px"><col style="width:84px"></colgroup>
                <thead><tr><th></th><th>Clicks</th><th>Leads</th><th>Earnings</th><th>EPC</th><th>CR</th></tr></thead>
                <tbody>${rows.map(r => `<tr><td>${r}</td><td>0</td><td>0</td><td>$0.00</td><td>$0.00</td><td>0.00%</td></tr>`).join('')}</tbody>
            </table>
        `;
    }
}

class MonthlySnapshot extends ShadowBox {
    styles() {
        return `
            :host { display: block; font-size: 7px; color: #555; }
            .quick { margin-top: 8px; line-height: 10px; }
            a { color: #5d95d0; }
            a.on { font-weight: 700; color: #4c8ccc; }
            .box { margin: 32px 8px 0; height: 25px; box-sizing: border-box; background: #f5f5f5; border-top: 1px solid #e4e4e4; border-bottom: 1px solid #e4e4e4; }
        `;
    }

    markup() {
        return `
            <div class="quick">Quick Report: <a class="on">This Month</a> | <a>Last Month</a></div>
            <div class="box"></div>
        `;
    }
}

class OffersTable extends ShadowBox {
    styles() {
        return `
            :host { display: block; margin: 9px 0 19px; overflow: hidden; }
            .name { height: 24px; box-sizing: border-box; background: #f9f9f9; border-top: 1px solid #eee; border-bottom: 1px solid #eee; padding-left: 26px; display: flex; align-items: center; justify-content: center; font-weight: 300; font-size: 13.400px; color: #555; }
        `;
    }

    markup() {
        return '<div class="name">Name</div><slot></slot>';
    }
}

class OfferRow extends ShadowBox {
    styles() {
        return `
            :host { display: flex; align-items: center; height: ${this.getAttribute('h')}px; box-sizing: border-box; background: ${this.hasAttribute('alt') ? '#f9f9f9' : '#fff'}; border-bottom: 1px solid #eee; color: #f8a13a; }
            svg { flex: none; margin: 0 6px 0 2px; }
            div { flex: none; width: 218px; text-align: center; white-space: nowrap; font-size: 7.500px; font-weight: 500; line-height: 10.300px; color: #666; overflow: visible; }
        `;
    }

    markup() {
        return `${svg('<circle cx="12" cy="12" r="10.700" fill="none" stroke="currentColor" stroke-width="1.700"/><path d="M12 4.500c.5 3 4.800 5 4.800 9.500a4.800 4.800 0 0 1-9.600 0c0-2 1-3.500 2-4.500.2 1.500.8 2.200 1.500 2.500 0-2.500.3-5 1.300-7.500z" fill="currentColor"/><path d="M12 12c.3 1.300 2 2 2 3.600a2 2 0 0 1-4 0c0-1.400 1.600-2.100 2-3.600z" fill="#fff"/>', 18)}<div><slot></slot></div>`;
    }
}

class WinTaskbar extends ShadowBox {
    styles() {
        return `
            :host { display: flex; align-items: center; flex: none; height: 20px; box-sizing: border-box; background: linear-gradient(90deg, #8899b0 0, #9aaac1 118px, #a4b8d4 240px, #a4b8d4 100%); border-top: 1px solid #8296ae; }
            .cell { width: 30px; height: 100%; flex: none; display: flex; align-items: center; justify-content: center; box-sizing: border-box; }
            .tile { background: #b2c2d7; border-left: 1px solid #d4deea; border-right: 1px solid #8a9cb4; }
            .on { background: #d2dde9; }
            .tray { margin-left: auto; display: flex; align-items: center; gap: 3px; padding-right: 13px; }
            .clock { color: #fff; font: 8px/10px "Liberation Sans", sans-serif; text-align: center; margin-left: 9px; }
            .up { width: 0; height: 0; border: 3px solid transparent; border-bottom-color: #fff; margin: 0 5px 3px 0; }
        `;
    }

    markup() {
        const icon = (n, s = 17) => svg(APP_ICONS[n], s);
        return `
            <div class="cell">${icon('winorb', 19)}</div>
            <div class="cell">${icon('ie')}</div>
            <div class="cell">${icon('fold')}</div>
            <div class="cell" style="width:28px;margin-right:1px">${icon('media', 15)}</div>
            <div class="cell tile on">${icon('chrome')}</div>
            <div class="cell tile">${icon('firefox')}</div>
            <div class="cell tile" style="width:28px">${icon('skype')}</div>
            <div class="tray">
                <i class="up"></i>
                ${svg('<rect x="2" y="2" width="20" height="20" rx="4" fill="#6db33f"/><path d="M7 12l4 4 6-8" fill="none" stroke="#fff" stroke-width="3"/>', 11)}
                ${svg('<path d="M2 21L22 3v18z" fill="#2f6fb0"/>', 11)}
                ${svg('<rect x="4" y="4" width="16" height="16" fill="#eee" stroke="#444" stroke-width="2"/><rect x="12" y="12" width="8" height="8" fill="#d49a2a"/>', 11)}
                ${svg('<path d="M3 9h5l6-5v16l-6-5H3z" fill="#eee"/><path d="M17 8c2 2 2 6 0 8" fill="none" stroke="#eee" stroke-width="2"/>', 11)}
                <div class="clock">8:39 AM<br>1/13/2021</div>
            </div>
        `;
    }
}

class BlogMark extends ShadowBox {
    styles() {
        return `
            :host { position: absolute; left: 935px; top: 556px; width: 140px; height: 42px; background: rgba(255,255,255,.22); display: flex; align-items: flex-start; padding-top: 4px; box-sizing: border-box; pointer-events: none; }
            svg { flex: none; margin: 0 0 0 2px; }
            .cn { font: 500 19.300px/24px "Noto Sans CJK SC", sans-serif; color: #3f6fc4; white-space: nowrap; margin-left: 1px; }
            .en { position: absolute; left: 54px; bottom: 4px; font: 8px "Liberation Sans", sans-serif; color: rgba(50,60,80,.75); white-space: nowrap; }
        `;
    }

    markup() {
        return `
            <svg width="38" height="36" viewBox="0 0 38 36">
                <path d="M1 2h9l6 30H8z" fill="#e58f95" opacity=".8"/>
                <path d="M10 2h8l4 30h-7z" fill="#8fc89a" opacity=".75"/>
                <path d="M22 32L30 2h8l-9 30z" fill="#3f8fd8" opacity=".85"/>
                <path d="M16 8h8l-1 24h-3z" fill="#7ac3d8" opacity=".7"/>
            </svg>
            <div class="cn">双小刚博客</div>
            <div class="en">shuangxiaogang.com</div>
        `;
    }
}

const elements = {
    'mac-desk': MacDesk,
    'mac-titlebar': MacTitlebar,
    'desk-area': DeskArea,
    'desk-icon': DeskIcon,
    'round-button': RoundButton,
    'skype-window': SkypeWindow,
    'chrome-window': ChromeWindow,
    'tab-item': TabItem,
    'browser-tabs': BrowserTabs,
    'browser-toolbar': BrowserToolbar,
    'book-item': BookItem,
    'bookmark-bar': BookmarkBar,
    'dms-page': DmsPage,
    'nav-item': NavItem,
    'dms-sidebar': DmsSidebar,
    'dash-board': DashBoard,
    'stat-card': StatCard,
    'dash-panel': DashPanel,
    'stats-table': StatsTable,
    'monthly-snapshot': MonthlySnapshot,
    'offers-table': OffersTable,
    'offer-row': OfferRow,
    'win-taskbar': WinTaskbar,
    'blog-mark': BlogMark
};

Object.keys(elements).forEach(name => {
    if (!customElements.get(name)) {
        customElements.define(name, elements[name]);
    }
});
</script>
</body>
</html>
